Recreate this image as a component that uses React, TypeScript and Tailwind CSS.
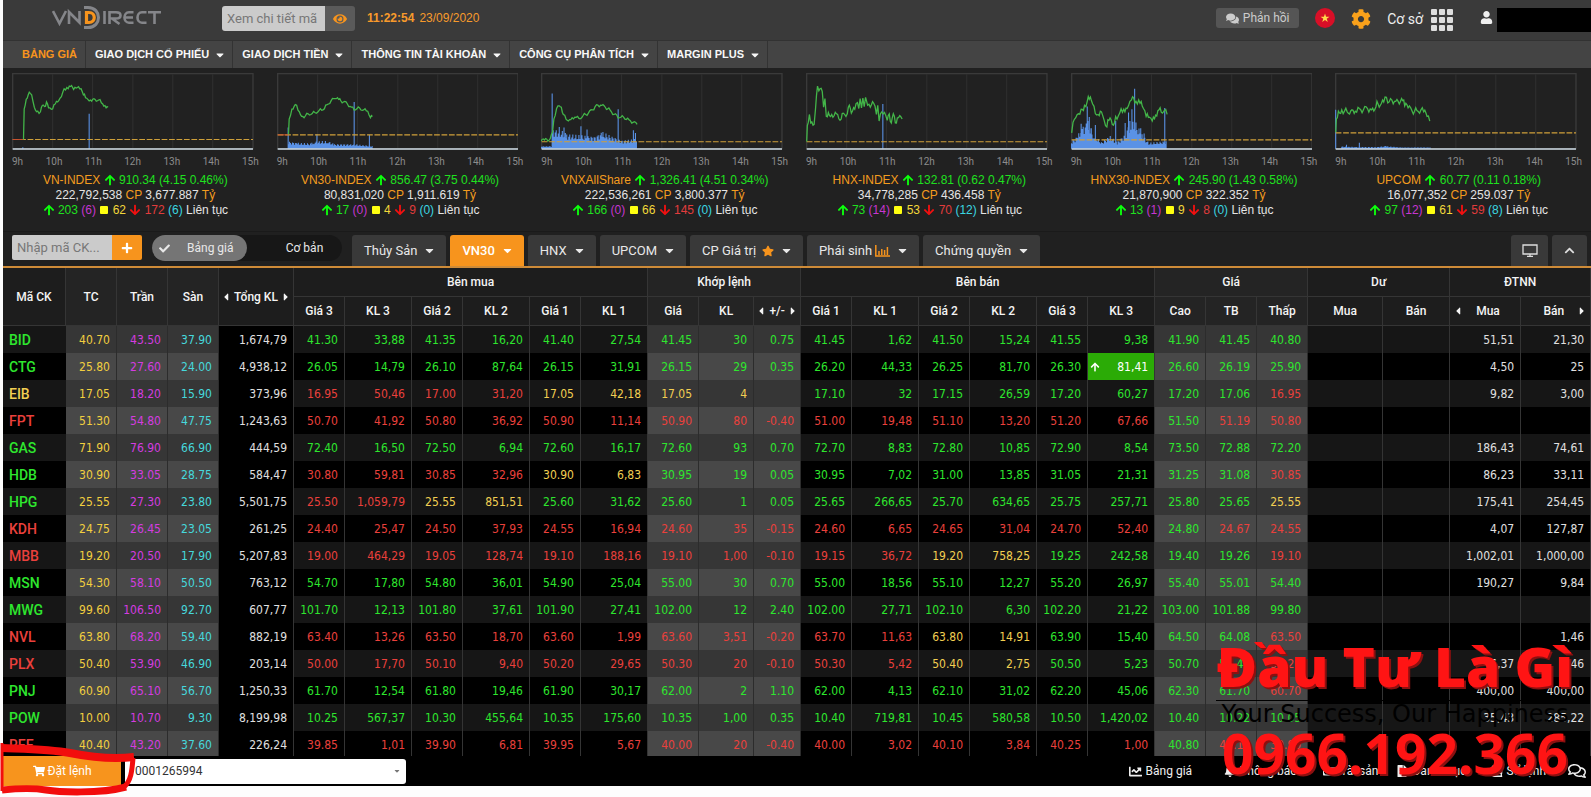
import { ReactNode } from 'react';
import clsx from 'clsx';
import {
    FaArrowDown, FaArrowUp, FaBell, FaBook, FaCaretDown, FaCaretLeft, FaCaretRight, FaChartLine, FaCheck,
    FaChevronUp, FaCog, FaComments, FaEye, FaFileAlt, FaPlus, FaRegComments, FaRegMoneyBillAlt,
    FaShoppingCart, FaStar, FaUser,
} from 'react-icons/fa';

type Point = [number, number];

interface IndexInfo {
    name: string;
    value: string;
    change: string;
    volume: string;
    total: string;
    up: number;
    ceil: number;
    same: number;
    down: number;
    floor: number;
    base: number;
    noise: number;
    line: Point[];
    bars: Point[];
    profile: Point[];
}

const INDEXES: IndexInfo[] = [
    {
        name: 'VN-INDEX', value: '910.34', change: '(4.15 0.46%)', volume: '222,792,538', total: '3,677.887',
        up: 203, ceil: 6, same: 62, down: 172, floor: 6, base: 202, noise: 6,
        line: [[34, 202], [36, 110], [42, 80], [48, 66], [54, 62], [58, 66], [62, 86], [66, 104], [76, 116], [84, 118], [90, 98], [96, 102], [102, 88], [108, 106], [116, 110], [128, 94], [138, 84], [146, 72], [154, 48], [166, 48], [176, 38], [182, 50], [190, 46], [200, 48], [208, 58], [214, 64], [224, 80], [232, 82], [242, 78], [256, 82], [268, 94], [278, 106], [284, 104]],
        bars: [[228, 106], [32, 4]],
        profile: [],
    },
    {
        name: 'VN30-INDEX', value: '856.47', change: '(3.75 0.44%)', volume: '80,831,020', total: '1,911.619',
        up: 17, ceil: 0, same: 4, down: 9, floor: 0, base: 188, noise: 5,
        line: [[34, 186], [36, 140], [44, 110], [54, 96], [58, 98], [66, 118], [76, 132], [84, 130], [92, 124], [100, 126], [112, 120], [124, 114], [136, 112], [148, 96], [160, 84], [172, 78], [182, 80], [196, 88], [208, 94], [220, 104], [232, 112], [244, 106], [256, 112], [268, 116], [276, 136], [282, 132]],
        bars: [[33, 64], [118, 44], [228, 142], [273, 42]],
        profile: [[34, 22], [60, 18], [100, 16], [110, 22], [150, 24], [170, 14], [230, 14], [284, 8]],
    },
    {
        name: 'VNXAllShare', value: '1,326.41', change: '(4.51 0.34%)', volume: '222,536,261', total: '3,800.377',
        up: 166, ceil: 0, same: 66, down: 145, floor: 0, base: 209, noise: 5,
        line: [[0, 207], [10, 204], [24, 204], [34, 180], [38, 140], [46, 108], [54, 100], [60, 104], [66, 126], [74, 140], [88, 142], [100, 134], [112, 138], [124, 130], [140, 122], [152, 112], [160, 102], [176, 98], [190, 104], [204, 112], [216, 126], [232, 136], [244, 134], [260, 142], [272, 150], [284, 156]],
        bars: [[33, 168], [54, 66], [68, 64], [118, 68], [136, 58], [228, 120], [273, 56], [279, 48]],
        profile: [[0, 8], [30, 8], [36, 60], [60, 56], [76, 45], [130, 40], [160, 38], [180, 52], [210, 38], [240, 26], [284, 30]],
    },
    {
        name: 'HNX-INDEX', value: '132.81', change: '(0.62 0.47%)', volume: '34,778,285', total: '436.458',
        up: 73, ceil: 14, same: 53, down: 70, floor: 12, base: 209, noise: 9,
        line: [[2, 208], [4, 160], [10, 126], [14, 152], [24, 156], [28, 110], [34, 40], [38, 54], [48, 56], [52, 104], [56, 78], [60, 132], [66, 120], [76, 126], [90, 124], [104, 140], [110, 122], [122, 124], [128, 98], [134, 122], [144, 110], [152, 90], [156, 108], [160, 78], [164, 106], [168, 76], [172, 102], [176, 74], [182, 98], [190, 104], [200, 92], [208, 126], [212, 98], [216, 146], [224, 118], [232, 120], [240, 144], [246, 124], [252, 152], [258, 124], [264, 152], [270, 136], [284, 140]],
        bars: [[227, 136]],
        profile: [],
    },
    {
        name: 'HNX30-INDEX', value: '245.90', change: '(1.43 0.58%)', volume: '21,870,900', total: '322.352',
        up: 13, ceil: 1, same: 9, down: 8, floor: 0, base: 203, noise: 12,
        line: [[2, 182], [6, 150], [14, 136], [22, 124], [30, 110], [40, 98], [48, 86], [54, 80], [64, 94], [72, 124], [80, 126], [90, 118], [98, 144], [106, 164], [112, 144], [122, 156], [132, 132], [144, 122], [156, 110], [166, 108], [174, 86], [182, 72], [192, 86], [204, 92], [214, 108], [222, 132], [232, 134], [240, 146], [250, 128], [260, 112], [270, 122], [276, 114], [284, 126]],
        bars: [[30, 76], [48, 128], [54, 96], [60, 62], [72, 72], [132, 84], [160, 78], [170, 110], [180, 120], [188, 182], [206, 62], [216, 46], [277, 124]],
        profile: [[0, 22], [20, 40], [30, 66], [50, 84], [66, 46], [90, 20], [116, 40], [136, 20], [160, 46], [174, 84], [192, 80], [212, 42], [230, 18], [284, 24]],
    },
    {
        name: 'UPCOM', value: '60.77', change: '(0.11 0.18%)', volume: '16,077,352', total: '259.037',
        up: 97, ceil: 12, same: 61, down: 59, floor: 8, base: 182, noise: 10,
        line: [[2, 180], [4, 140], [10, 116], [20, 112], [36, 118], [50, 112], [60, 116], [72, 108], [84, 112], [96, 108], [108, 112], [118, 110], [124, 86], [134, 98], [144, 88], [152, 74], [160, 88], [176, 86], [190, 94], [200, 84], [206, 100], [216, 106], [228, 116], [242, 114], [254, 112], [262, 118], [272, 132], [280, 146]],
        bars: [[2, 118], [72, 18], [34, 12], [150, 8]],
        profile: [[20, 7], [60, 5], [120, 5], [150, 8], [200, 4], [284, 4]],
    },
];

const HOURS = ['9h', '10h', '11h', '12h', '13h', '14h', '15h'];

const MENU = ['GIAO DỊCH CỔ PHIẾU', 'GIAO DỊCH TIỀN', 'THÔNG TIN TÀI KHOẢN', 'CÔNG CỤ PHÂN TÍCH', 'MARGIN PLUS'];

// code, TC, trần, sàn, tổng KL, 3 x mua, khớp, +/-, 3 x bán, cao, TB, thấp, ĐTNN mua, ĐTNN bán
const ROWS = [
    'BID 40.70 43.50 37.90 1,674,79 41.30 33,88 41.35 16,20 41.40 27,54 41.45 30 0.75 41.45 1,62 41.50 15,24 41.55 9,38 41.90 41.45 40.80 51,51 21,30',
    'CTG 25.80 27.60 24.00 4,938,12 26.05 14,79 26.10 87,64 26.15 31,91 26.15 29 0.35 26.20 44,33 26.25 81,70 26.30 81,41 26.60 26.19 25.90 4,50 25',
    'EIB 17.05 18.20 15.90 373,96 16.95 50,46 17.00 31,20 17.05 42,18 17.05 4 _ 17.10 32 17.15 26,59 17.20 60,27 17.20 17.06 16.95 9,82 3,00',
    'FPT 51.30 54.80 47.75 1,243,63 50.70 41,92 50.80 36,92 50.90 11,14 50.90 80 -0.40 51.00 19,48 51.10 13,20 51.20 67,66 51.50 51.19 50.80 _ _',
    'GAS 71.90 76.90 66.90 444,59 72.40 16,50 72.50 6,94 72.60 16,17 72.60 93 0.70 72.70 8,83 72.80 10,85 72.90 8,54 73.50 72.88 72.20 186,43 74,61',
    'HDB 30.90 33.05 28.75 584,47 30.80 59,81 30.85 32,96 30.90 6,83 30.95 19 0.05 30.95 7,02 31.00 13,85 31.05 21,31 31.25 31.08 30.85 86,23 33,11',
    'HPG 25.55 27.30 23.80 5,501,75 25.50 1,059,79 25.55 851,51 25.60 31,62 25.60 1 0.05 25.65 266,65 25.70 634,65 25.75 257,71 25.80 25.65 25.55 175,41 254,45',
    'KDH 24.75 26.45 23.05 261,25 24.40 25,47 24.50 37,93 24.55 16,94 24.60 35 -0.15 24.60 6,65 24.65 31,04 24.70 52,40 24.80 24.67 24.55 4,07 127,87',
    'MBB 19.20 20.50 17.90 5,207,83 19.00 464,29 19.05 128,74 19.10 188,16 19.10 1,00 -0.10 19.15 36,72 19.20 758,25 19.25 242,58 19.40 19.26 19.10 1,002,01 1,000,00',
    'MSN 54.30 58.10 50.50 763,12 54.70 17,80 54.80 36,01 54.90 25,04 55.00 30 0.70 55.00 18,56 55.10 12,27 55.20 26,97 55.40 55.01 54.40 190,27 9,84',
    'MWG 99.60 106.50 92.70 607,77 101.70 12,13 101.80 37,61 101.90 27,41 102.00 12 2.40 102.00 27,71 102.10 6,30 102.20 21,22 103.00 101.88 99.80 _ _',
    'NVL 63.80 68.20 59.40 882,19 63.40 13,26 63.50 18,70 63.60 1,99 63.60 3,51 -0.20 63.70 11,63 63.80 14,91 63.90 15,40 64.50 64.08 63.50 _ 1,46',
    'PLX 50.40 53.90 46.90 203,14 50.00 17,70 50.10 9,40 50.20 29,65 50.30 20 -0.10 50.30 5,42 50.40 2,75 50.50 5,23 50.70 50.42 50.20 6,37 6,46',
    'PNJ 60.90 65.10 56.70 1,250,33 61.70 12,54 61.80 19,46 61.90 30,17 62.00 2 1.10 62.00 4,13 62.10 31,02 62.20 45,06 62.30 61.70 60.70 400,00 400,00',
    'POW 10.00 10.70 9.30 8,199,98 10.25 567,37 10.30 455,64 10.35 175,60 10.35 1,00 0.35 10.40 719,81 10.45 580,58 10.50 1,420,02 10.40 10.22 10.05 35,43 285,22',
    'REE 40.40 43.20 37.60 226,24 39.85 1,01 39.90 6,81 39.95 5,67 40.00 20 -0.40 40.00 3,02 40.10 3,84 40.25 1,00 40.80 40.19 39.90 _ _',
].map((r) => r.split(' ').map((v) => (v === '_' ? '' : v)));

// jitter between the key points so the curve looks like tick data
function tickPath(line: Point[], noise: number) {
    let d = `M${line[0][0]} ${line[0][1]}`;
    for (let i = 1; i < line.length; i++) {
        const [x0, y0] = line[i - 1];
        const [x1, y1] = line[i];
        const steps = Math.max(1, Math.round((x1 - x0) / 4));
        for (let s = 1; s <= steps; s++) {
            const x = x0 + ((x1 - x0) * s) / steps;
            const wobble = s === steps ? 0 : Math.sin(x * 12.9) * noise;
            d += ` L${x.toFixed(1)} ${(y0 + ((y1 - y0) * s) / steps + wobble).toFixed(1)}`;
        }
    }
    return d;
}

function barPath(bars: Point[], profile: Point[]) {
    let d = bars.map(([x, h]) => `M${x} 230V${230 - h}`).join('');
    for (let i = 1; i < profile.length; i++) {
        const [x0, h0] = profile[i - 1];
        const [x1, h1] = profile[i];
        for (let x = x0; x < x1; x += 3) {
            const h = (h0 + ((h1 - h0) * (x - x0)) / (x1 - x0)) * (0.8 + 0.2 * Math.sin(x * 7.7));
            d += `M${x} 230V${(230 - Math.max(h, 3)).toFixed(1)}`;
        }
    }
    return d;
}

function IndexCard({ item }: { item: IndexInfo }) {
    return (
        <div className="pt-[5px] pb-[13px]">
            <div className="pl-[9px] pr-[14px]">
                <svg viewBox="0 0 714 234" preserveAspectRatio="none" className="block w-full h-[77px]">
                    <rect x="2" y="2" width="710" height="228" fill="none" stroke="#3a3a3a" strokeWidth="4" />
                    {[120, 238, 357, 475, 593].map((x) => (
                        <path key={x} d={`M${x} 4V228`} stroke="#303030" strokeWidth="3" />
                    ))}
                    <path d={barPath(item.bars, item.profile)} stroke="#5a92e6" strokeWidth="3.2" />
                    <path d={`M2 ${item.base}H712`} stroke="#cfa03a" strokeWidth="3.6" strokeDasharray="17 5" />
                    {item.line[0][0] > 20 && <path d={`M2 ${item.base}H34`} stroke="#c9512f" strokeWidth="3" />}
                    <path d={tickPath(item.line, item.noise)} fill="none" stroke="#43b649" strokeWidth="3.8" />
                    <path d="M2 231H712" stroke="#cfdde6" strokeWidth="5" />
                </svg>
            </div>
            <div className="flex justify-between pl-[9px] pr-[9px] pt-[5px] text-[10px] leading-[14px] text-[#8c8c8c]">
                {HOURS.map((h) => <span key={h}>{h}</span>)}
            </div>
            <div className='pt-1 text-center font-["Liberation_Sans",sans-serif] text-[12px] leading-[15px] text-[#e4e4e4]'>
                <p>
                    <span className="text-[#f39c1f]">{item.name}</span>{' '}
                    <span className="text-[#1fe01f]"><FaArrowUp className="inline align-[-2px] text-[#0cff0c]" /> {item.value} {item.change}</span>
                </p>
                <p>{item.volume} <span className="text-[#f39c1f]">CP</span> {item.total} <span className="text-[#f39c1f]">Tỷ</span></p>
                <p>
                    <FaArrowUp className="inline align-[-2px] text-[#0cff0c]" /> <span className="text-[#1fe01f]">{item.up}</span>{' '}
                    <span className="text-[#c636d0]">({item.ceil})</span>{' '}
                    <span className="mx-px inline-block size-2 rounded-[1px] bg-[#ffff10]" />{' '}
                    <span className="text-[#f2d83a]">{item.same}</span>{' '}
                    <FaArrowDown className="inline align-[-2px] text-[#f01010]" /> <span className="text-[#e23c3c]">{item.down}</span>{' '}
                    <span className="text-[#3ad6e0]">({item.floor})</span> Liên tục
                </p>
            </div>
        </div>
    );
}

function Logo() {
    return (
        <svg viewBox="0 0 110 24" className="h-6 w-[110px]" role="img" aria-label="VNDIRECT" fill="none" stroke="#85868a" strokeWidth="2.6">
            <path d="M1 5L7.500 17.500L14 5" />
            <path d="M17 18V6L27.500 16.500V5" />
            <path d="M32 1.500H36C50 1.500 50 21.500 36 21.500H32" strokeWidth="3" />
            <path d="M34.500 6.500H37C44 6.500 44 16.500 37 16.500H34.500Z" stroke="#f7941d" strokeWidth="3.200" />
            <path d="M52.500 5V18" />
            <path d="M57.500 18V6.300H64C70 6.300 70 12.500 64 12.500H60L67.500 18" />
            <path d="M81.500 6.300H77C71 6.300 71 16.700 77 16.700H81.500M73 11.500H81" />
            <path d="M94.500 6.300H90C84 6.300 84 16.700 90 16.700H94.500" />
            <path d="M96 6.300H109M102.500 6.300V18" />
        </svg>
    );
}

function TopBar() {
    return (
        <header className="flex h-10 items-start bg-[#3a3a3a]">
            <a href="#" className="ml-[49px] mt-[6px] block"><Logo /></a>
            <div className="ml-[60px] mt-[6px] flex">
                <input type="text" aria-label="Xem chi tiết mã" placeholder="Xem chi tiết mã" className="h-[25px] w-[103px] rounded-l-[3px] bg-[#cbcbcb] pl-[5px] text-[13px] text-[#555] placeholder-[#777] outline-none" />
                <button aria-label="Xem" className="flex h-[25px] w-[30px] items-center justify-center rounded-r-[3px] bg-[#5a5a5a] text-[14px] text-[#f7941d]"><FaEye /></button>
            </div>
            <p className='ml-3 mt-[10px] font-["Liberation_Sans",sans-serif] text-[12px] leading-4 text-[#f79a2b]'><b className="mr-[5px]">11:22:54</b>23/09/2020</p>
            <button className="ml-auto mt-2 flex h-5 w-[83px] items-center justify-center gap-1 rounded-[3px] bg-[#555] text-[12px] text-[#ccc]"><FaComments className="text-[13px]" />Phản hồi</button>
            <svg viewBox="0 0 20 20" className="ml-4 mt-2 size-5" role="img" aria-label="Tiếng Việt">
                <circle cx="10" cy="10" r="10" fill="#d80f27" />
                <path d="M10 5.500L11.100 8.800H14.500L11.700 10.800L12.800 14L10 12L7.200 14L8.300 10.800L5.500 8.800H8.900Z" fill="#ffd84a" />
            </svg>
            <button aria-label="Cài đặt" className="ml-4 mt-[9px] text-[20px] text-[#f9a11b]"><FaCog /></button>
            <span className="ml-4 mt-[11px] text-[14px] leading-4 text-[#eee]">Cơ sở</span>
            <button aria-label="Ứng dụng" className="ml-2 mt-[9px] grid grid-cols-3 gap-[2px]">
                {HOURS.concat('a', 'b').map((k) => <span key={k} className="size-[6px] rounded-[1px] bg-[#ddd]" />)}
            </button>
            <FaUser className="ml-[27px] mt-[11px] text-[13px] text-[#f0f0f0]" />
            <div className="ml-1 mt-2 h-6 w-[94px] bg-black" />
        </header>
    );
}

function NavBar() {
    return (
        <nav className='flex h-7 border-t border-[#323232] bg-[#444] font-["Liberation_Sans",sans-serif] text-[11px] font-bold text-[#f8f8f8]'>
            <a href="#" className="flex items-center border-r border-[#333] pl-[19px] pr-2 text-[#f7941d]">BẢNG GIÁ</a>
            {MENU.map((m) => (
                <button key={m} className="flex items-center gap-[5px] border-r border-[#333] pl-[9px] pr-[6px]">{m}<FaCaretDown className="text-[12px]" /></button>
            ))}
        </nav>
    );
}

function Tab({ children, active }: { children: ReactNode; active?: boolean }) {
    return (
        <button className={clsx('flex h-[31px] items-center rounded-t-[3px] pl-3 pr-[10px] text-[13px]', active ? 'bg-[#f7941d] font-medium text-white' : 'bg-[#393939] text-[#e8e8e8]')}>
            {children}
            <FaCaretDown className="ml-[6px] text-[13px]" />
        </button>
    );
}

function Toolbar() {
    return (
        <div className="flex items-end border-b-2 border-[#ce8b38] bg-[#202020] pt-[3px]">
            <div className="mb-[6px] ml-[9px] flex">
                <input type="text" aria-label="Nhập mã CK" placeholder="Nhập mã CK..." className="h-[25px] w-[100px] rounded-l-[2px] bg-[#cbcbcb] pl-[5px] text-[13px] text-[#555] placeholder-[#777] outline-none" />
                <button aria-label="Thêm mã" className="flex h-[25px] w-[30px] items-center justify-center rounded-r-[2px] bg-[#f7941d] text-[12px] text-white"><FaPlus /></button>
            </div>
            <div className="mb-[5px] ml-[10px] flex h-[26px] w-[190px] rounded-full bg-[#171717] text-[12px] text-[#e8e8e8]">
                <button className="flex w-[95px] items-center rounded-full bg-[#757575] pl-[7px]"><FaCheck className="mr-[17px] text-[11px]" />Bảng giá</button>
                <button className="flex-1 pl-5">Cơ bản</button>
            </div>
            <div className="ml-[10px] flex gap-1">
                <Tab>Thủy Sản</Tab>
                <Tab active>VN30</Tab>
                <Tab>HNX</Tab>
                <Tab>UPCOM</Tab>
                <Tab>CP Giá trị <FaStar className="ml-[6px] text-[12px] text-[#f7941d]" /></Tab>
                <Tab>
                    Phái sinh
                    <svg viewBox="0 0 15 12" className="ml-[3px] h-3 w-[15px]" stroke="#f7941d" fill="none" strokeWidth="1.500">
                        <path d="M.8 0V11H15M4 10V6M6.800 10V4M9.600 10V5M12.400 10V2" />
                    </svg>
                </Tab>
                <Tab>Chứng quyền</Tab>
            </div>
            <div className="ml-auto mr-1 flex gap-1">
                <button aria-label="Toàn màn hình" className="flex h-[31px] w-[37px] items-center justify-center rounded-t-[3px] bg-[#393939]">
                    <svg viewBox="0 0 16 13" className="h-[13px] w-4" stroke="#ddd" fill="none"><path d="M1 1H15V10H1ZM8 10V12M5 12.500H11" strokeWidth="1.300" /></svg>
                </button>
                <button aria-label="Thu gọn" className="flex h-[31px] w-[35px] items-center justify-center rounded-t-[3px] bg-[#393939] text-[11px] text-[#ddd]"><FaChevronUp /></button>
            </div>
        </div>
    );
}

const COLS = [
    'w-[63px]', 'w-[51px]', 'w-[51px]', 'w-[51px]', 'w-[75px]',
    'w-[51px]', 'w-[67px]', 'w-[51px]', 'w-[67px]', 'w-[51px]', 'w-[67px]',
    'w-[51px]', 'w-[55px]', 'w-[47px]',
    'w-[51px]', 'w-[67px]', 'w-[51px]', 'w-[67px]', 'w-[51px]', 'w-[67px]',
    'w-[51px]', 'w-[51px]', 'w-[51px]',
    'w-[75px]', 'w-[67px]', 'w-[71px]', 'w-[70px]',
];

const GROUPS = [
    { label: 'Bên mua', span: 6 },
    { label: 'Khớp lệnh', span: 3, shade: true },
    { label: 'Bên bán', span: 6 },
    { label: 'Giá', span: 3, shade: true },
    { label: 'Dư', span: 2 },
    { label: 'ĐTNN', span: 2 },
];

const SUBS = ['Giá 3', 'KL 3', 'Giá 2', 'KL 2', 'Giá 1', 'KL 1', 'Giá', 'KL', '+/-', 'Giá 1', 'KL 1', 'Giá 2', 'KL 2', 'Giá 3', 'KL 3', 'Cao', 'TB', 'Thấp', 'Mua', 'Bán', 'Mua', 'Bán'];

function compareColor(price: string, ref: string) {
    const diff = parseFloat(price) - parseFloat(ref);
    if (diff > 0) return 'text-[#2ee62e]';
    if (diff < 0) return 'text-[#ea403c]';
    return 'text-[#f2cf52]';
}

function Row({ r, odd }: { r: string[]; odd: boolean }) {
    const ref = r[1];
    // insert the two empty "Dư" columns before the foreign ones
    const cells = [...r.slice(0, 23), '', '', ...r.slice(23)];
    const color = (i: number) => {
        if (i === 1) return 'text-[#f2cf3f]';
        if (i === 2) return 'text-[#d53ce0]';
        if (i === 3) return 'text-[#46d8dc]';
        if (i === 4 || i > 22) return 'text-[#e0e0e0]';
        if (i <= 10) return compareColor(r[i % 2 ? i : i - 1], ref);
        if (i <= 13) return compareColor(r[11], ref);
        if (i <= 19) return compareColor(r[i % 2 ? i - 1 : i], ref);
        return compareColor(r[i], ref);
    };
    return (
        <tr className={clsx('h-[27px]', odd ? 'bg-black' : 'bg-[#161616]')}>
            <th scope="row" className={clsx('pl-[6px] text-left font-["Roboto",sans-serif] text-[14px] font-medium leading-4', compareColor(r[11], ref))}>{r[0]}</th>
            {cells.slice(1).map((v, k) => {
                const i = k + 1;
                const shaded = (i >= 1 && i <= 3) || (i >= 11 && i <= 13) || (i >= 20 && i <= 22);
                const hot = r[0] === 'CTG' && i === 19;
                return (
                    <td
                        key={i}
                        className={clsx(
                            'border-r pr-[6px] text-right leading-4',
                            shaded ? 'border-[#2c2c2c]' : 'border-[#343434]',
                            shaded && (odd ? 'bg-[#484848]' : 'bg-[#363636]'),
                            i === 4 && 'bg-black',
                            hot ? 'bg-[#2bab06] text-white' : color(i),
                        )}
                    >
                        {hot ? <span className="flex items-center justify-between pl-[2px]"><FaArrowUp className="text-[10px]" />{v}</span> : v}
                    </td>
                );
            })}
        </tr>
    );
}

function PriceBoard() {
    const th = 'border-r border-b border-[#353535] font-medium';
    return (
        <div className="min-h-0 flex-1 overflow-hidden bg-black">
            <table className='w-full table-fixed border-separate border-spacing-0 font-["DejaVu_Sans_Condensed","DejaVu_Sans",sans-serif] text-[12px]'>
                <colgroup>{COLS.map((c, i) => <col key={i} className={c} />)}</colgroup>
                <thead className='bg-[#1d1d1d] font-["Roboto",sans-serif] text-[12px] text-[#f4f4f4]'>
                    <tr className="h-[29px]">
                        <th rowSpan={2} className={th}>Mã CK</th>
                        <th rowSpan={2} className={clsx(th, 'bg-[#242424]')}>TC</th>
                        <th rowSpan={2} className={clsx(th, 'bg-[#242424]')}>Trần</th>
                        <th rowSpan={2} className={clsx(th, 'bg-[#242424]')}>Sàn</th>
                        <th rowSpan={2} className={th}>
                            <span className="flex items-center justify-between px-px"><FaCaretLeft />Tổng KL<FaCaretRight /></span>
                        </th>
                        {GROUPS.map((g) => <th key={g.label} colSpan={g.span} className={clsx(th, g.shade && 'bg-[#242424]')}>{g.label}</th>)}
                    </tr>
                    <tr className="h-[29px]">
                        {SUBS.map((s, i) => (
                            <th key={i} className={clsx(th, ((i >= 6 && i <= 8) || (i >= 15 && i <= 17)) && 'bg-[#242424]')}>
                                {i === 8 && <span className="flex items-center justify-between px-px"><FaCaretLeft />{s}<FaCaretRight /></span>}
                                {i === 20 && <span className="flex items-center gap-3 px-[2px]"><FaCaretLeft />{s}</span>}
                                {i === 21 && <span className="flex items-center justify-end gap-3 px-[2px]">{s}<FaCaretRight /></span>}
                                {i !== 8 && i < 20 && s}
                            </th>
                        ))}
                    </tr>
                </thead>
                <tbody>
                    {ROWS.map((r, i) => <Row key={r[0]} r={r} odd={i % 2 === 1} />)}
                </tbody>
            </table>
        </div>
    );
}

function Footer() {
    const link = 'flex items-center gap-1';
    return (
        <footer className="flex h-[30px] shrink-0 items-center bg-black text-[12px] text-[#eee]">
            <button className="flex h-full w-[118px] items-center justify-center gap-[3px] bg-[#f7941d] text-white"><FaShoppingCart />Đặt lệnh</button>
            <div className="relative ml-1">
                <select aria-label="Tài khoản" className="h-[25px] w-[281px] appearance-none rounded-[3px] bg-white pl-[10px] text-[12px] text-[#333]">
                    <option>0001265994</option>
                </select>
                <FaCaretDown className="pointer-events-none absolute right-[5px] top-2 text-[8px] text-[#777]" />
            </div>
            <div className="ml-auto mr-[5px] flex items-center">
                <a href="#" className={clsx(link, 'mr-8')}><FaChartLine className="text-[13px]" />Bảng giá</a>
                <a href="#" className={clsx(link, 'mr-[26px]')}><FaBell />Thông báo</a>
                <a href="#" className={clsx(link, 'mr-[18px]')}><FaRegMoneyBillAlt className="text-[13px]" />Tài sản</a>
                <a href="#" className={clsx(link, 'mr-6')}><FaFileAlt />Danh mục</a>
                <a href="#" className={clsx(link, 'mr-[22px]')}><FaBook />Sổ lệnh</a>
                <button aria-label="Trò chuyện" className="text-[18px]"><FaRegComments /></button>
            </div>
        </footer>
    );
}

function Overlay() {
    return (
        <div className='pointer-events-none absolute bottom-[18px] right-[17px] flex w-[358px] flex-col items-center font-["Open_Sans",sans-serif] font-extrabold text-[#ff1414] [text-shadow:2px_2px_0_#8c1010]'>
            <p className="whitespace-nowrap text-[55px] leading-[68px]">Đầu Tư Là Gì</p>
            <div className="h-px w-full bg-black" />
            <p className='whitespace-nowrap font-["DejaVu_Sans",sans-serif] text-[24px] font-normal leading-[26px] text-black [text-shadow:none]'>Your Success, Our Happiness</p>
            <p className="whitespace-nowrap text-[55px] font-bold leading-[52px]">0966.192.366</p>
        </div>
    );
}

export default function App() {
    return (
        <div className='relative flex h-screen flex-col overflow-hidden bg-[#fdfdfd] pb-[11px] pl-[3px] font-["Roboto",sans-serif]'>
            <TopBar />
            <NavBar />
            <section className="grid grid-cols-6 border-b border-[#1a1a1a] bg-[#212121]">
                {INDEXES.map((item) => <IndexCard key={item.name} item={item} />)}
            </section>
            <Toolbar />
            <PriceBoard />
            <Footer />
            <Overlay />
            {/* hand-drawn marker round the order button */}
            <svg viewBox="0 0 140 56" className="pointer-events-none absolute bottom-0 left-0 h-14 w-[140px]" fill="none" stroke="#f20d0d" strokeLinejoin="round">
                <path d="M2 2V50" strokeWidth="3" />
                <path d="M2 7C30 8 50 8 70 12S110 19 134 16" strokeWidth="8" />
                <path d="M133 17C132 30 131 40 124 46" strokeWidth="5" />
                <path d="M2 49C22 47 34 47 46 49S100 53 126 46" strokeWidth="7" />
            </svg>
        </div>
    );
}
